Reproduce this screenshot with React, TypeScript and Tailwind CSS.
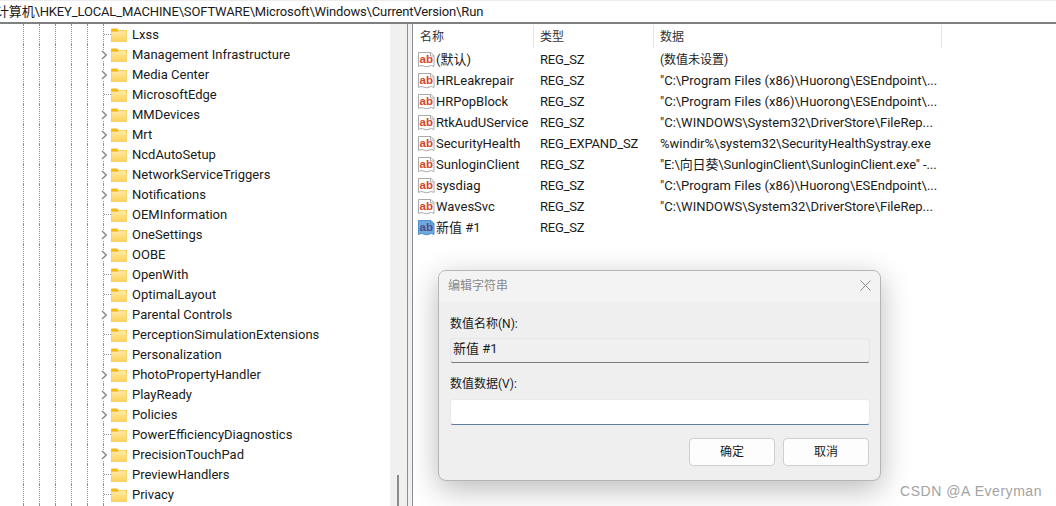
import React from 'react';

const uiFont = { fontFamily: 'Roboto, "Noto Sans CJK SC", sans-serif' };

interface TreeItem {
  name: string;
  expandable: boolean;
}

const treeItems: TreeItem[] = [
  { name: 'Lxss', expandable: false },
  { name: 'Management Infrastructure', expandable: true },
  { name: 'Media Center', expandable: true },
  { name: 'MicrosoftEdge', expandable: false },
  { name: 'MMDevices', expandable: true },
  { name: 'Mrt', expandable: true },
  { name: 'NcdAutoSetup', expandable: true },
  { name: 'NetworkServiceTriggers', expandable: true },
  { name: 'Notifications', expandable: true },
  { name: 'OEMInformation', expandable: false },
  { name: 'OneSettings', expandable: true },
  { name: 'OOBE', expandable: true },
  { name: 'OpenWith', expandable: false },
  { name: 'OptimalLayout', expandable: false },
  { name: 'Parental Controls', expandable: true },
  { name: 'PerceptionSimulationExtensions', expandable: false },
  { name: 'Personalization', expandable: false },
  { name: 'PhotoPropertyHandler', expandable: true },
  { name: 'PlayReady', expandable: true },
  { name: 'Policies', expandable: true },
  { name: 'PowerEfficiencyDiagnostics', expandable: false },
  { name: 'PrecisionTouchPad', expandable: true },
  { name: 'PreviewHandlers', expandable: false },
  { name: 'Privacy', expandable: false },
];

interface RegValue {
  name: string;
  type: string;
  data: string;
  dataClass?: string;
  isNew?: boolean;
}

const regValues: RegValue[] = [
  { name: '(默认)', type: 'REG_SZ', data: '(数值未设置)', dataClass: 'text-[12px]' },
  { name: 'HRLeakrepair', type: 'REG_SZ', data: '"C:\\Program Files (x86)\\Huorong\\ESEndpoint\\...' },
  { name: 'HRPopBlock', type: 'REG_SZ', data: '"C:\\Program Files (x86)\\Huorong\\ESEndpoint\\...' },
  { name: 'RtkAudUService', type: 'REG_SZ', data: '"C:\\WINDOWS\\System32\\DriverStore\\FileRep...' },
  { name: 'SecurityHealth', type: 'REG_EXPAND_SZ', data: '%windir%\\system32\\SecurityHealthSystray.exe' },
  {
    name: 'SunloginClient',
    type: 'REG_SZ',
    data: '"E:\\向日葵\\SunloginClient\\SunloginClient.exe" -...',
    dataClass: 'tracking-[-0.1px]',
  },
  { name: 'sysdiag', type: 'REG_SZ', data: '"C:\\Program Files (x86)\\Huorong\\ESEndpoint\\...' },
  { name: 'WavesSvc', type: 'REG_SZ', data: '"C:\\WINDOWS\\System32\\DriverStore\\FileRep...' },
  { name: '新值 #1', type: 'REG_SZ', data: '', isNew: true },
];

const FolderIcon = () => (
  <svg width="16" height="14" viewBox="0 0 16 14" className="mt-[1px] shrink-0">
    <defs>
      <linearGradient id="folderBody" x1="0" y1="0" x2="0" y2="1">
        <stop offset="0" stopColor="#ffeaa6" />
        <stop offset="1" stopColor="#fdd25a" />
      </linearGradient>
    </defs>
    <path d="M0 1.5Q0 .5 1 .5H6L8 2.5H16V5H0Z" fill="#f6b80f" />
    <path d="M0 3.5H7L8 2.5H15.5V13.5H0Z" fill="url(#folderBody)" stroke="#f2c23e" strokeWidth=".6" />
  </svg>
);

const Chevron = () => (
  <svg width="7" height="10" viewBox="0 0 7 10" className="absolute left-[-3px] top-[6px] bg-white">
    <path d="M1 1L5.2 5L1 9" fill="none" stroke="#8a8a8a" strokeWidth="1.5" />
  </svg>
);

const ValueIcon = ({ selected }: { selected?: boolean }) => (
  <svg width="17" height="17" viewBox="0 0 17 17" className="shrink-0">
    <path
      d="M.5 1.5H13L16 4.5V15.5Q13.5 13.6 11 15.2Q8 16.6 5.5 15Q3 13.8 .5 15.5Z"
      fill={selected ? '#6fa8dc' : '#ffffff'}
      stroke={selected ? '#4f8fcf' : '#aaaaaa'}
    />
    <path d="M12.5 1.5V5H16" fill="none" stroke={selected ? '#4f8fcf' : '#aaaaaa'} />
    <text
      x="1.5"
      y="11.5"
      fontSize="11.5"
      fontWeight="700"
      fontFamily="Liberation Sans, sans-serif"
      fill={selected ? '#4d4f8f' : '#d8432a'}
    >
      ab
    </text>
  </svg>
);

const DottedGuides = () => (
  <>
    {[0, 1, 2, 3, 4].map((i) => (
      <span key={i} className="h-full w-4 shrink-0 border-l border-dotted border-[#8f8f8f]" />
    ))}
  </>
);

const TreeRow = ({ item }: { item: TreeItem }) => (
  <div className="flex h-5 items-center pl-[23px] text-[13px] text-[#1a1a1a]">
    <DottedGuides />
    <span className="relative h-full w-2 shrink-0 border-l border-dotted border-[#8f8f8f]">
      {item.expandable ? (
        <Chevron />
      ) : (
        <span className="absolute left-0 top-[10px] w-[7px] border-t border-dotted border-[#8f8f8f]" />
      )}
    </span>
    <FolderIcon />
    <span className="ml-[5px] whitespace-nowrap pt-[1px]">{item.name}</span>
  </div>
);

const ValueRow = ({ value }: { value: RegValue }) => (
  <div className="flex h-[21px] items-center text-[13px] text-[#1a1a1a]">
    <div className="flex w-[121px] shrink-0 items-center gap-[1px] pl-[5px]">
      <ValueIcon selected={value.isNew} />
      <span className="whitespace-nowrap">{value.name}</span>
    </div>
    <div className="w-[120px] shrink-0 whitespace-nowrap pl-[6px] tracking-[-0.2px]">{value.type}</div>
    <div className={`whitespace-nowrap pl-[6px] ${value.dataClass ?? ''}`}>{value.data}</div>
  </div>
);

const HeaderCell = ({ label, className }: { label: string; className: string }) => (
  <div className={`flex h-full items-center border-r border-[#e5e5e5] text-[12px] text-[#333333] ${className}`}>
    {label}
  </div>
);

const EditStringDialog = () => (
  <div className="absolute left-[438px] top-[270px] flex h-[211px] w-[443px] flex-col overflow-hidden rounded-lg border border-[#b5b5b5] bg-[#efefef] shadow-[0_8px_30px_rgba(0,0,0,0.28)]">
    <div className="flex h-[30px] shrink-0 items-center justify-between bg-[#f3f3f3] pl-[9px] pr-[10px]">
      <span className="text-[12px] text-[#8a8a8a]">编辑字符串</span>
      <svg width="11" height="11" viewBox="0 0 11 11" className="mb-[2px] mr-[-1px]">
        <path d="M.5 .5L10.5 10.5M10.5 .5L.5 10.5" stroke="#8c8c8c" strokeWidth="1" />
      </svg>
    </div>
    <div className="flex flex-1 flex-col pl-[11px] pr-[10px] pt-[14px] text-[12px] text-[#1a1a1a]">
      <label className="h-[18px] leading-[18px]">数值名称(N):</label>
      <div className="mt-[5px] flex h-[25px] items-center rounded-[3px] border border-[#e6e6e6] border-b-[#7a7a7a] bg-[#f0f0f0] pb-[3px] pl-[2px] text-[13px]">
        新值 #1
      </div>
      <label className="mt-[12px] h-[18px] leading-[18px]">数值数据(V):</label>
      <div className="mt-[6px] h-[26px] rounded-[3px] border border-[#e9e9e9] border-b-[#5f7d9f] bg-white" />
      <div className="mt-[13px] flex justify-end gap-2 pr-[1px]">
        <button className="h-[28px] w-[86px] rounded border border-[#cfcfcf] bg-[#fdfdfd] text-[12px] text-[#1a1a1a]">确定</button>
        <button className="h-[28px] w-[86px] rounded border border-[#cfcfcf] bg-[#fdfdfd] text-[12px] text-[#1a1a1a]">取消</button>
      </div>
    </div>
  </div>
);

export default function App() {
  return (
    <div className="relative flex h-[506px] w-[1056px] flex-col overflow-hidden bg-white" style={uiFont}>
      {/* address bar, path starts scrolled slightly past the left edge */}
      <div className="flex h-[24px] shrink-0 items-center overflow-hidden border-b-2 border-t border-b-[#808080] border-t-[#ececec] text-[13px] text-[#1a1a1a]">
        <span className="ml-[-4px] whitespace-nowrap tracking-[-0.15px]">计算机\HKEY_LOCAL_MACHINE\SOFTWARE\Microsoft\Windows\CurrentVersion\Run</span>
      </div>

      <div className="flex min-h-0 flex-1">
        <div className="w-[390px] shrink-0 overflow-hidden">
          {treeItems.map((item) => (
            <TreeRow key={item.name} item={item} />
          ))}
          <div className="flex h-5 pl-[23px]">
            <DottedGuides />
            <span className="h-full border-l border-dotted border-[#8f8f8f]" />
          </div>
        </div>

        {/* tree scrollbar and splitter */}
        <div className="flex w-[17px] shrink-0 items-end bg-[#f0f0f0] pl-[7px]">
          <div className="h-[31px] w-[2px] bg-[#8a8a8a]" />
        </div>
        <div className="h-full w-[6px] shrink-0 border-x border-[#8a8f96] bg-[#f0f0f0]" />

        <div className="min-w-0 flex-1 overflow-hidden">
          <div className="flex h-[25px] items-stretch py-[1px]">
            <HeaderCell label="名称" className="w-[121px] pl-[7px]" />
            <HeaderCell label="类型" className="w-[120px] pl-[6px]" />
            <HeaderCell label="数据" className="w-[288px] pl-[6px]" />
          </div>
          {regValues.map((value) => (
            <ValueRow key={value.name} value={value} />
          ))}
        </div>
      </div>

      <EditStringDialog />

      <span className="absolute left-[900px] top-[481px] text-[14px] tracking-[0.55px] text-[#a3a3a3]" style={{ fontFamily: '"Liberation Sans", sans-serif' }}>
        CSDN @A Everyman
      </span>
    </div>
  );
}
